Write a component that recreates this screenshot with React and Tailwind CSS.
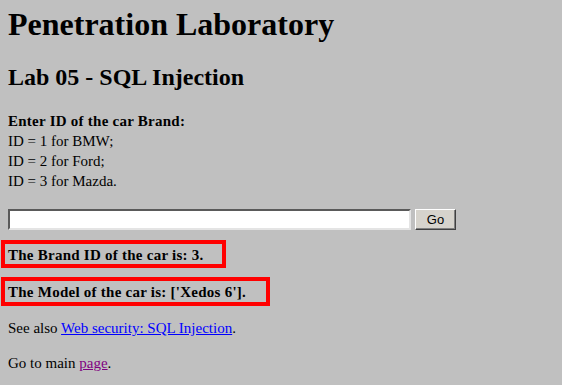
export default function App() {
  return (
    <div className="min-h-screen w-full bg-[#c0c0c0] font-['Liberation_Serif',serif] text-black">
      <h1 className="ml-2 pt-[6px] text-[32px] font-bold leading-[37px]">Penetration Laboratory</h1>
      <h2 className="ml-2 mt-[20px] text-[24px] font-bold leading-[28px]">Lab 05 - SQL Injection</h2>
      <div className="ml-2 mt-[20px] text-[15px] leading-[20px]">
        <div className="font-bold tracking-[0.25px]">Enter ID of the car Brand:</div>
        <div>ID = 1 for BMW;</div>
        <div>ID = 2 for Ford;</div>
        <div>ID = 3 for Mazda.</div>
      </div>
      <div className="ml-2 mt-[18px] flex items-start">
        <input
          type="text"
          className="h-[21px] w-[403px] border-2 border-t-[#5a5a5a] border-l-[#5a5a5a] border-b-[#e4e4e4] border-r-[#e4e4e4] bg-white outline-none"
        />
        <button className="ml-[4px] h-[21px] w-[41px] border border-t-white border-l-white border-b-[#404040] border-r-[#404040] bg-[#d6d3cc] font-['Liberation_Sans',sans-serif] text-[13px] leading-[17px] text-black shadow-[inset_-1px_-1px_0_#808080]">
          Go
        </button>
      </div>
      <div className="ml-[1px] mt-[10px] h-[28px] w-[225px] border-4 border-[#f00] pl-[3px] pt-[2px] text-[15px] font-bold leading-[18px] tracking-[0.25px]">
        The Brand ID of the car is: 3.
      </div>
      <div className="ml-[1px] mt-[9px] h-[29px] w-[269px] border-4 border-[#f00] pl-[3px] pt-[2px] text-[15px] font-bold leading-[18px] tracking-[0.25px]">
        The Model of the car is: ['Xedos 6'].
      </div>
      <p className="ml-2 mt-[12px] text-[15px] leading-[20px]">
        See also{" "}
        <a href="#" className="text-[#0000ff] underline">
          Web security: SQL Injection
        </a>
        .
      </p>
      <p className="ml-2 mt-[15px] text-[15px] leading-[20px]">
        Go to main{" "}
        <a href="#" className="text-[#800080] underline">
          page
        </a>
        .
      </p>
    </div>
  );
}
